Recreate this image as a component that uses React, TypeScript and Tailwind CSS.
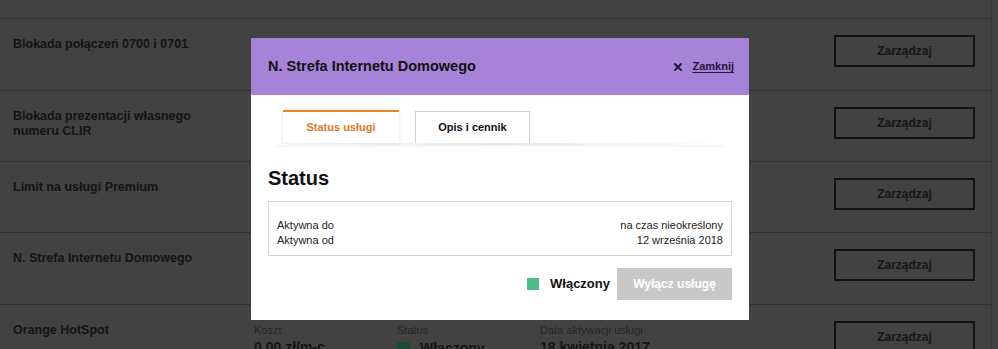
import { X } from 'lucide-react';

interface ServiceRow {
    title: string[];
    height: string;
}

const rows: ServiceRow[] = [
    { title: ['Blokada połączeń 0700 i 0701'], height: 'h-[72px]' },
    { title: ['Blokada prezentacji własnego', 'numeru CLIR'], height: 'h-[71px]' },
    { title: ['Limit na usługi Premium'], height: 'h-[71px]' },
    { title: ['N. Strefa Internetu Domowego'], height: 'h-[72px]' },
];

function ManageButton() {
    return (
        <button className="w-[141px] h-[32px] border-2 border-[#121212] text-[12px] font-bold text-[#161616] flex items-center justify-center">
            Zarządzaj
        </button>
    );
}

function ServiceModal() {
    return (
        <div className="absolute left-[251px] top-[38px] w-[498px] bg-white">
            {/* Header */}
            <div className="h-[57px] bg-[#a683d8] flex items-center justify-between pl-[17px] pr-[15px]">
                <h2 className="text-[14.5px] font-bold text-[#111]">N. Strefa Internetu Domowego</h2>
                <button className="flex items-center gap-[8px] text-[11px] font-bold text-[#1c1840]">
                    <X size={12} strokeWidth={4} />
                    <span className="underline underline-offset-2">Zamknij</span>
                </button>
            </div>

            <div className="px-[17px] pb-[20px]">
                {/* Tabs */}
                <div className="relative pt-[15px]">
                    <div className="flex gap-[16px] pl-[15px]">
                        <div className="w-[116px] h-[33px] border-t-2 border-[#e5832d] bg-white shadow-[0_0_3px_rgba(0,0,0,0.12)] flex items-center justify-center text-[11px] font-bold text-[#e07a28] relative z-10">
                            Status usługi
                        </div>
                        <div className="w-[115px] h-[32px] mt-[1px] border border-b-0 border-[#cfcfcf] flex items-center justify-center text-[11px] font-bold text-[#111]">
                            Opis i cennik
                        </div>
                    </div>
                    <div className="mx-[7px] h-[2px] bg-gradient-to-r from-transparent via-[#e6e6e6] to-transparent shadow-[0_1px_3px_rgba(0,0,0,0.08)]"></div>
                </div>

                <h3 className="mt-[21px] text-[20px] font-bold text-[#111] leading-[24px]">Status</h3>

                <div className="mt-[11px] border border-[#d2d2d2] px-[8px] pt-[16px] pb-[7px] text-[11px] leading-[15px] text-[#222]">
                    <div className="flex justify-between">
                        <span>Aktywna do</span>
                        <span>na czas nieokreślony</span>
                    </div>
                    <div className="flex justify-between">
                        <span>Aktywna od</span>
                        <span>12 września 2018</span>
                    </div>
                </div>

                <div className="mt-[12px] flex items-center justify-end">
                    <span className="w-[12px] h-[12px] bg-[#4dbd84]"></span>
                    <span className="ml-[11px] text-[13px] font-bold text-[#111]">Włączony</span>
                    <button className="ml-[7px] w-[115px] h-[32px] bg-[#c8c8c8] text-white text-[12px] font-bold">
                        Wyłącz usługę
                    </button>
                </div>
            </div>
        </div>
    );
}

export default function App() {
    return (
        <div className="relative w-[998px] h-[349px] overflow-hidden bg-[#424242] font-['Liberation_Sans',Arial,sans-serif]">
            <div className="w-[992px] h-full border-r border-[#383838]">
                <div className="h-[19px] border-b border-[#333]"></div>

                {rows.map((row, idx) => (
                    <div key={idx} className={`${row.height} border-b border-[#333] flex justify-between pl-[13px] pr-[16px] pt-[16px]`}>
                        <div className="pt-[2px] text-[12.5px] font-bold leading-[15px] text-[#141414]">
                            {row.title.map((line, i) => (
                                <div key={i}>{line}</div>
                            ))}
                        </div>
                        <ManageButton />
                    </div>
                ))}

                {/* Last row, partly visible */}
                <div className="flex justify-between pl-[13px] pr-[16px] pt-[16px]">
                    <div className="flex">
                        <div className="w-[241px] pt-[2px] text-[12.5px] font-bold leading-[15px] text-[#141414]">Orange HotSpot</div>
                        <div className="w-[143px] pt-[3px]">
                            <div className="text-[11px] text-[#262626] leading-[13px]">Koszt</div>
                            <div className="mt-[2px] text-[14px] font-bold leading-[16px] text-[#141414]">0,00 zł/m-c</div>
                        </div>
                        <div className="w-[143px] pt-[3px]">
                            <div className="text-[11px] text-[#262626] leading-[13px]">Status</div>
                            <div className="mt-[3px] flex items-center gap-[10px]">
                                <span className="w-[13px] h-[13px] bg-[#1d4a34]"></span>
                                <span className="text-[14px] font-bold leading-[16px] text-[#141414]">Włączony</span>
                            </div>
                        </div>
                        <div className="pt-[3px]">
                            <div className="text-[11px] text-[#262626] leading-[13px]">Data aktywacji usługi</div>
                            <div className="mt-[2px] text-[14px] font-bold leading-[16px] text-[#141414]">18 kwietnia 2017</div>
                        </div>
                    </div>
                    <ManageButton />
                </div>
            </div>

            <ServiceModal />
        </div>
    );
}
